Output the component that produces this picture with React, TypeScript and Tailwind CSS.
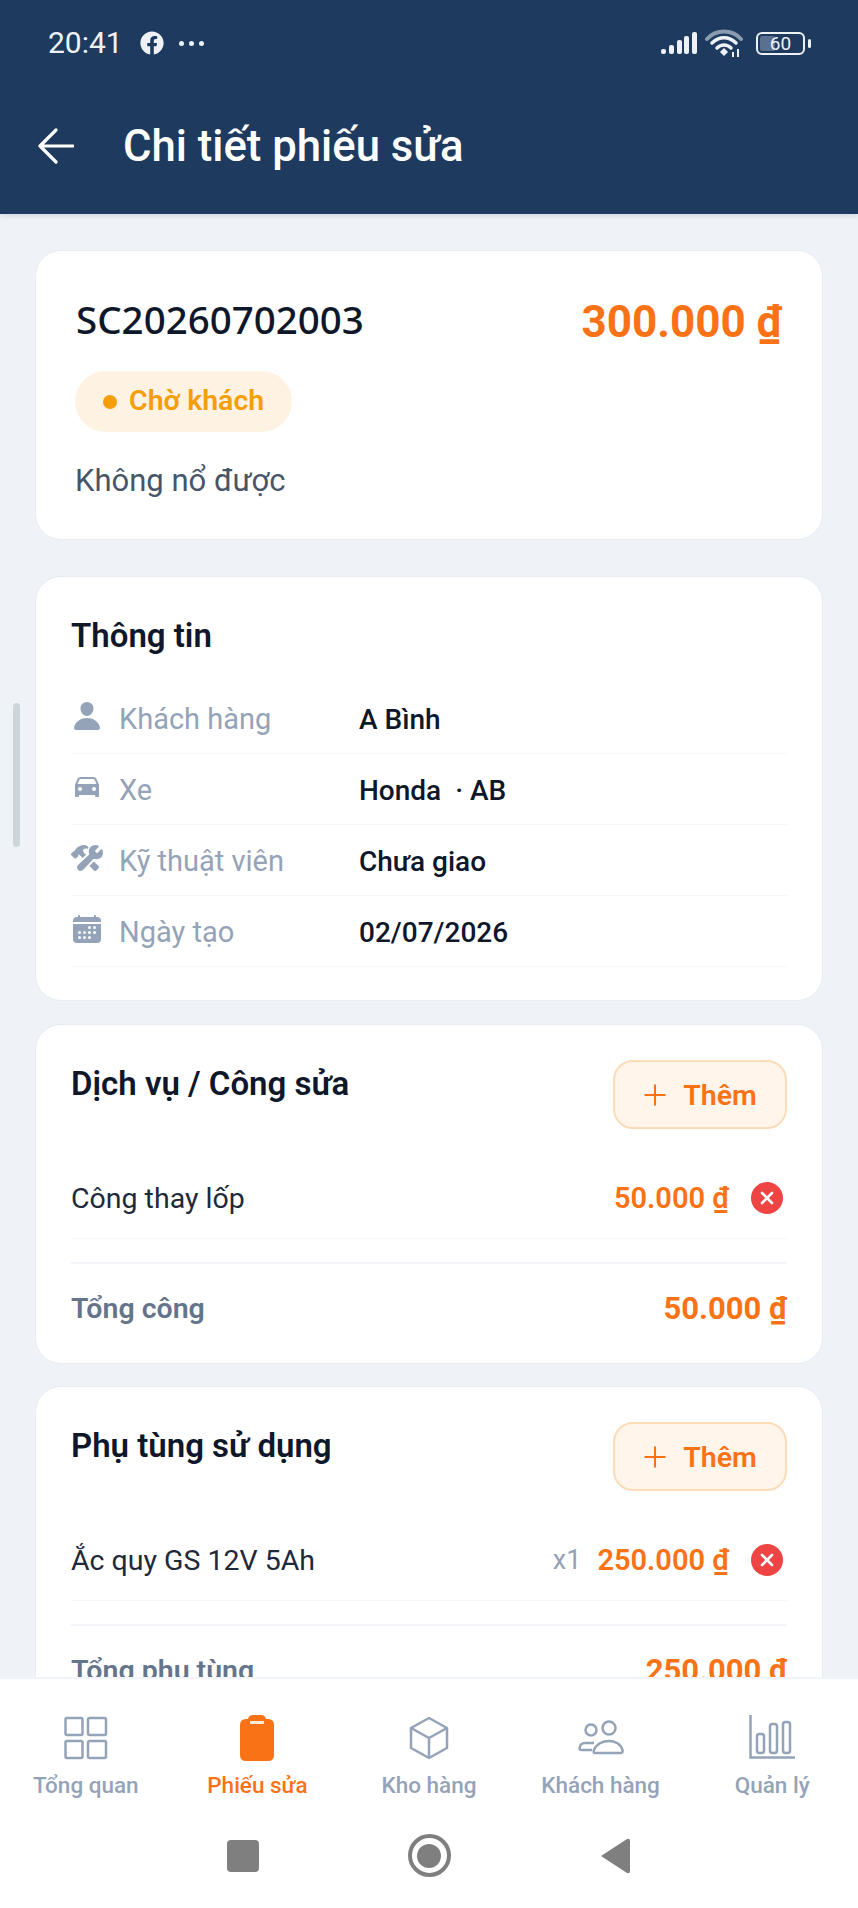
import React from 'react';
import { IoPerson, IoCar, IoConstruct, IoCalendar } from 'react-icons/io5';
import { FaFacebook } from 'react-icons/fa';

const infoRows = [
  { icon: IoPerson, label: 'Khách hàng', value: 'A Bình' },
  { icon: IoCar, label: 'Xe', value: 'Honda  · AB' },
  { icon: IoConstruct, label: 'Kỹ thuật viên', value: 'Chưa giao' },
  { icon: IoCalendar, label: 'Ngày tạo', value: '02/07/2026' },
];

const StatusBar = () => (
  <div className="flex items-center justify-between h-[86px] pl-[48px] pr-[47px] text-[#eef2f6]">
    <div className="flex items-center">
      <span className="text-[30px] leading-none">20:41</span>
      <FaFacebook className="ml-[17px] w-[24px] h-[24px]" />
      <span className="ml-[15px] flex gap-[5px]">
        <i className="block w-[5px] h-[5px] rounded-full bg-[#eef2f6]" />
        <i className="block w-[5px] h-[5px] rounded-full bg-[#eef2f6]" />
        <i className="block w-[5px] h-[5px] rounded-full bg-[#eef2f6]" />
      </span>
    </div>
    <div className="flex items-center">
      <svg width="36" height="24" viewBox="0 0 36 24" fill="#eef2f6">
        <rect x="0" y="18" width="5" height="5" rx="2" />
        <rect x="8" y="14" width="5" height="9" rx="2" />
        <rect x="16" y="9" width="5" height="14" rx="2" />
        <rect x="23" y="5" width="5" height="18" rx="2" />
        <rect x="31" y="1" width="5" height="22" rx="2" />
      </svg>
      <svg className="ml-[8px]" width="40" height="30" viewBox="0 0 40 30" fill="none">
        <path d="M2 11C11 1 27 1 36 11" stroke="#8a9bb0" strokeWidth="4" strokeLinecap="round" />
        <path d="M7 15C14 8 24 8 31 15" stroke="#eef2f6" strokeWidth="3.5" strokeLinecap="round" />
        <path d="M12 20C16 16 22 16 26 20" stroke="#eef2f6" strokeWidth="3.5" strokeLinecap="round" />
        <path d="M16 24L19 21L22 24L19 27Z" fill="#eef2f6" stroke="#eef2f6" strokeWidth="1.5" />
        <path d="M28 24V29M33 21V29" stroke="#eef2f6" strokeWidth="2" />
      </svg>
      <div className="ml-[11px] w-[49px] h-[23px] rounded-[6px] border-2 border-[#eef2f6] flex items-center p-[2px] relative">
        <div className="h-full w-[15px] bg-[#5a7090] rounded-[2px]" />
        <span className="absolute inset-0 flex items-center justify-center text-[19px] leading-none">60</span>
      </div>
      <div className="ml-[3px] w-[3px] h-[9px] rounded-[2px] bg-[#eef2f6]" />
    </div>
  </div>
);

const AddButton = () => (
  <div className="flex items-center justify-center gap-[16px] w-[174px] h-[69px] rounded-[20px] border-2 border-[#fcdcb8] bg-[#fff5eb] text-[#f97316]">
    <svg width="24" height="24" viewBox="0 0 24 24" fill="none" stroke="#f97316" strokeWidth="2">
      <path d="M12 1.5V22.5M1.5 12H22.5" />
    </svg>
    <span className="pt-[4px] text-[28.5px] leading-none font-semibold">Thêm</span>
  </div>
);

const RemoveDot = () => (
  <div className="ml-[22px] mr-[4px] w-[32px] h-[32px] rounded-full bg-[#ef4444] flex items-center justify-center">
    <svg width="14" height="14" viewBox="0 0 14 14" stroke="#fff" strokeWidth="2.6" strokeLinecap="round">
      <path d="M2 2L12 12M12 2L2 12" />
    </svg>
  </div>
);

const SectionCard = ({ title, name, qty, price, totalLabel, total }: { title: string; name: string; qty?: string; price: string; totalLabel: string; total: string }) => (
  <div className="bg-white rounded-[26px] border border-[#e8edf3] px-[35px] pt-[35px] pb-[31px] mb-[22px]">
    <div className="flex items-start justify-between h-[69px]">
      <h2 className="text-[33px] leading-[48px] font-semibold text-[#0f172a]">{title}</h2>
      <AddButton />
    </div>
    <div className="flex items-center h-[110px] pt-[28px] border-b border-[#f5f7fa]">
      <span className="pt-[4px] text-[28.5px] text-[#1e293b] flex-1">{name}</span>
      {qty && <span className="pt-[2px] text-[27px] text-[#94a3b8] mr-[16px]">{qty}</span>}
      <span className="pt-[3px] text-[29px] font-semibold text-[#f97316]">{price}</span>
      <RemoveDot />
    </div>
    <div className="flex items-center justify-between mt-[23px] pt-[21px] border-t-2 border-[#f3f5f8]">
      <span className="text-[28.5px] leading-[46px] font-semibold text-[#64748b]">{totalLabel}</span>
      <span className="pt-[1px] text-[31px] leading-[46px] font-bold text-[#f97316]">{total}</span>
    </div>
  </div>
);

const navStroke = { fill: 'none', stroke: '#94a3b8', strokeWidth: 2.5 };

const tabs = [
  {
    label: 'Tổng quan',
    icon: (
      <svg width="44" height="44" viewBox="0 0 44 44" {...navStroke}>
        <rect x="1.5" y="2" width="17" height="17" rx="1.5" />
        <rect x="24" y="2" width="18" height="17" rx="1.5" />
        <rect x="1.5" y="25" width="17" height="17" rx="1.5" />
        <rect x="24" y="25" width="18" height="17" rx="1.5" />
      </svg>
    ),
  },
  {
    label: 'Phiếu sửa',
    active: true,
    icon: (
      <svg width="34" height="46" viewBox="0 0 34 46">
        <path d="M8 4Q9 0 13 0H21Q25 0 26 4H28Q34 4 34 10V40Q34 46 28 46H6Q0 46 0 40V10Q0 4 6 4Z" fill="#f97316" />
        <rect x="10" y="6" width="14" height="3" fill="#ffe9d6" />
      </svg>
    ),
  },
  {
    label: 'Kho hàng',
    icon: (
      <svg width="40" height="44" viewBox="0 0 40 44" {...navStroke} strokeLinejoin="round">
        <path d="M20 2L38 12V32L20 42L2 32V12Z" />
        <path d="M2 12L20 22L38 12M20 22V42" />
      </svg>
    ),
  },
  {
    label: 'Khách hàng',
    icon: (
      <svg width="46" height="36" viewBox="0 0 46 36" {...navStroke}>
        <circle cx="13" cy="10" r="5.5" />
        <circle cx="31" cy="8" r="6.5" />
        <path d="M16 23H7Q2 23 1.5 28.5Q1.5 30 4 30H14" />
        <path d="M17 33Q15 33 16 30C18 24 25 21 31 21C37 21 43 24 44.5 30Q45 33 43 33Z" />
      </svg>
    ),
  },
  {
    label: 'Quản lý',
    icon: (
      <svg width="46" height="46" viewBox="0 0 46 46" {...navStroke}>
        <path d="M1.5 0V42.5H46" />
        <rect x="8" y="19" width="7" height="19" rx="2.5" />
        <rect x="21" y="9" width="7" height="29" rx="2.5" />
        <rect x="34" y="7" width="7" height="31" rx="2.5" />
      </svg>
    ),
  },
];

export default function App() {
  return (
    <div className="relative h-[1908px] w-[858px] flex flex-col overflow-hidden bg-[#eff3f8] font-['Roboto',sans-serif]">
      <header className="h-[214px] bg-[#1e3a5f] shrink-0 shadow-[0_1px_6px_rgba(15,23,42,0.15)] z-10">
        <StatusBar />
        <div className="flex items-center pl-[38px] h-[94px] pt-[26px]">
          <svg width="36" height="36" viewBox="0 0 36 36" fill="none" stroke="#fff" strokeWidth="3.2" strokeLinecap="round" strokeLinejoin="round">
            <path d="M2 18H35M18 2L2 18L18 34" />
          </svg>
          <h1 className="ml-[49px] pt-[2px] text-[43.7px] leading-none font-medium text-white">Chi tiết phiếu sửa</h1>
        </div>
      </header>

      <main className="flex-1 min-h-0 overflow-hidden px-[35px] pt-[36px]">
        <div className="bg-white rounded-[26px] border border-[#e8edf3] px-[40px] pt-[41px] h-[290px] mb-[36px]">
          <div className="flex items-center justify-between h-[54px]">
            <span className="text-[38.5px] leading-none font-medium text-[#0f172a] font-['Noto_Sans',sans-serif]">SC20260702003</span>
            <span className="pt-[5px] text-[44px] leading-none font-bold text-[#f97316]">300.000 ₫</span>
          </div>
          <div className="-ml-[1px] mt-[25px] w-[217px] h-[61px] rounded-full bg-[#fef3e2] flex items-center pl-[28px]">
            <span className="w-[14px] h-[14px] rounded-full bg-[#f59e0b]" />
            <span className="ml-[12px] text-[28.5px] leading-none font-semibold text-[#f59e0b]">Chờ khách</span>
          </div>
          <p className="-ml-[1px] mt-[33px] text-[31px] leading-none text-[#475569]">Không nổ được</p>
        </div>

        <div className="bg-white rounded-[26px] border border-[#e8edf3] px-[35px] pt-[40px] h-[425px] mb-[23px]">
          <h2 className="text-[33px] leading-[38px] font-semibold text-[#0f172a]">Thông tin</h2>
          <div className="mt-[28px]">
            {infoRows.map((row) => (
              <div key={row.label} className="flex items-center h-[71px] border-b border-[#f5f7fa]">
                <div className="w-[48px] flex justify-start -mt-[4px]">
                  <row.icon className="w-[32px] h-[32px] text-[#94a3b8]" />
                </div>
                <span className="w-[240px] pt-[4px] text-[29px] text-[#94a3b8]">{row.label}</span>
                <span className="pt-[3px] text-[28px] font-medium text-[#0f172a] whitespace-pre">{row.value}</span>
              </div>
            ))}
          </div>
        </div>

        <SectionCard title="Dịch vụ / Công sửa" name="Công thay lốp" price="50.000 ₫" totalLabel="Tổng công" total="50.000 ₫" />
        <SectionCard title="Phụ tùng sử dụng" name="Ắc quy GS 12V 5Ah" qty="x1" price="250.000 ₫" totalLabel="Tổng phụ tùng" total="250.000 ₫" />
      </main>

      <nav className="h-[231px] shrink-0 bg-white border-t-2 border-[#f1f5f9] z-10">
        <div className="grid grid-cols-5 pt-[35px]">
          {tabs.map((tab) => (
            <div key={tab.label} className="flex flex-col items-center">
              <div className="h-[48px] flex items-center justify-center">{tab.icon}</div>
              <span className={`mt-[8px] text-[22.5px] leading-[30px] font-medium ${tab.active ? 'text-[#f97316]' : 'text-[#94a3b8]'}`}>{tab.label}</span>
            </div>
          ))}
        </div>
        <div className="grid grid-cols-3 w-[558px] mx-auto mt-[34px] items-center justify-items-center">
          <div className="w-[32px] h-[32px] rounded-[4px] bg-[#7f7f7f]" />
          <div className="w-[43px] h-[43px] rounded-full border-[4px] border-[#7f7f7f] flex items-center justify-center">
            <div className="w-[24px] h-[24px] rounded-full bg-[#7f7f7f]" />
          </div>
          <svg width="30" height="36" viewBox="0 0 30 36" fill="#7f7f7f">
            <path d="M1 18L27 1Q30 0 30 3V33Q30 36 27 35Z" />
          </svg>
        </div>
      </nav>

      <div className="absolute left-[13px] top-[703px] w-[7px] h-[144px] rounded-full bg-[#cdd5db]" />
    </div>
  );
}
